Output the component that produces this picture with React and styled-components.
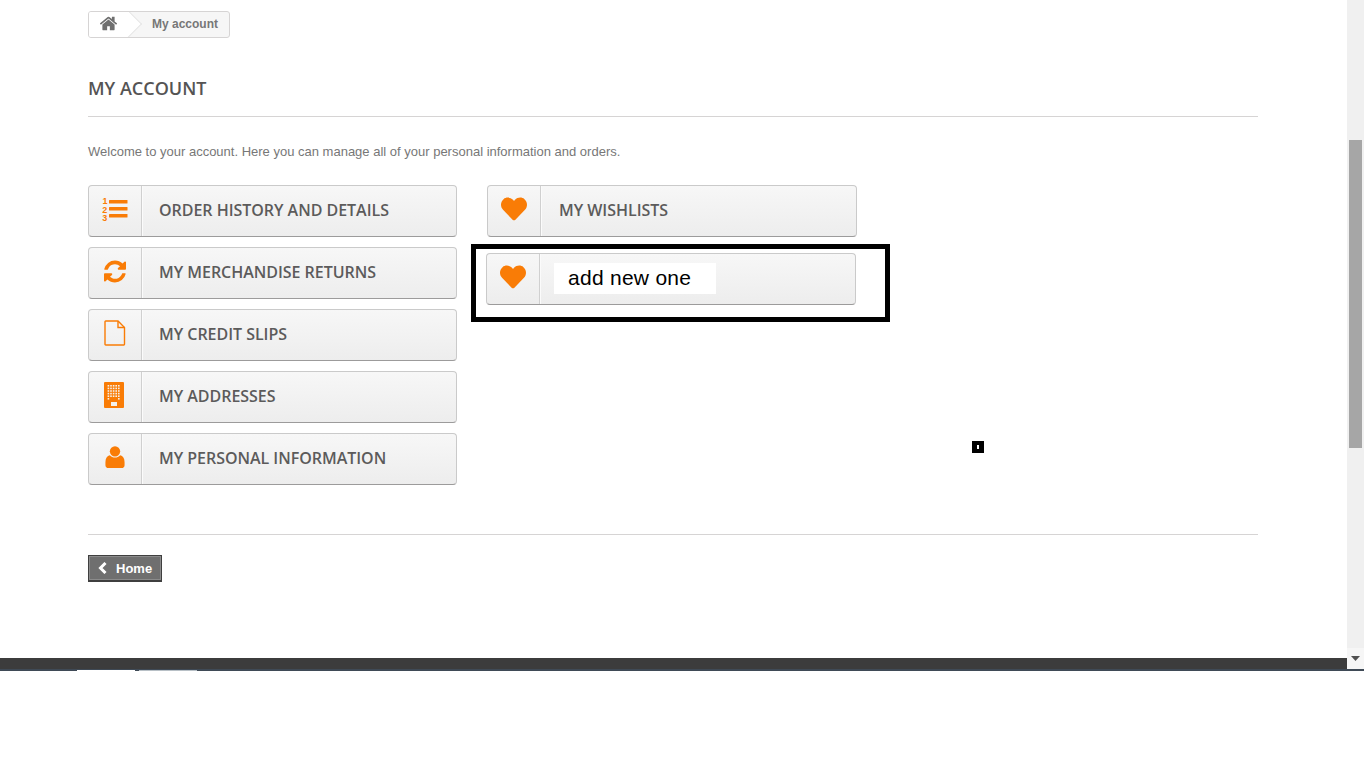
import React from 'react';
import styled, { createGlobalStyle } from 'styled-components';
import { FaHeart } from 'react-icons/fa';

const ORANGE = '#f97c06';

const GlobalStyle = createGlobalStyle`
  html, body {
    margin: 0;
    padding: 0;
    height: 100%;
    overflow: hidden;
    background: #fff;
  }
  body {
    font-family: "Liberation Sans", Arial, sans-serif;
    color: #777;
  }
`;

const Screen = styled.div`
  position: relative;
  width: 1366px;
  height: 768px;
  overflow: hidden;
`;

const Viewport = styled.div`
  display: flex;
  width: 1364px;
  height: 669px;
`;

const PageColumn = styled.div`
  flex: 1;
  display: flex;
  flex-direction: column;
  min-width: 0;
`;

const Content = styled.main`
  flex: 1;
  width: 1170px;
  margin-left: 88px;
  padding-top: 11px;
  box-sizing: border-box;
`;

const Breadcrumb = styled.nav`
  display: inline-flex;
  height: 27px;
  box-sizing: border-box;
  border: 1px solid #d6d4d4;
  border-radius: 3px;
  overflow: hidden;
  background: #f6f6f6;
  font-size: 12px;
  font-weight: bold;
  color: #777;
`;

const HomeCrumb = styled.a`
  position: relative;
  width: 40px;
  display: flex;
  align-items: center;
  justify-content: center;
  padding: 0 2px 3px 0;
  box-sizing: border-box;
  background: #fff;

  svg {
    position: relative;
    z-index: 1;
  }

  &::after {
    content: '';
    position: absolute;
    right: -9px;
    top: 2px;
    width: 19px;
    height: 19px;
    background: #fff;
    border-top: 1px solid #e4e4e4;
    border-right: 1px solid #e4e4e4;
    transform: rotate(45deg);
  }
`;

const CurrentCrumb = styled.span`
  display: flex;
  align-items: center;
  padding: 0 11px 2px 23px;
`;

const PageHeading = styled.h1`
  margin: 38px 0 0;
  padding-bottom: 16px;
  border-bottom: 1px solid #d6d4d4;
  font-family: "Open Sans", sans-serif;
  font-size: 18px;
  line-height: 24px;
  font-weight: 600;
  color: #555454;
`;

const Intro = styled.p`
  margin: 26px 0 0;
  font-size: 13px;
  line-height: 18px;
  color: #777;
`;

const Columns = styled.div`
  display: flex;
  margin-top: 24px;
  padding-bottom: 49px;
  border-bottom: 1px solid #d6d4d4;
`;

const LeftColumn = styled.div`
  display: flex;
  flex-direction: column;
  gap: 10px;
  width: 369px;
`;

const RightColumn = styled.div`
  display: flex;
  flex-direction: column;
  margin-left: 30px;
  width: 370px;
`;

const Highlight = styled.div`
  width: 419px;
  height: 78px;
  margin: 7px 0 0 -16px;
  padding: 4px 0 0 10px;
  border: 5px solid #000;
  box-sizing: border-box;
  background: #fff;
`;

const AccountButton = styled.a`
  display: flex;
  width: ${(p) => p.$width || 369}px;
  height: 52px;
  box-sizing: border-box;
  border: 1px solid #cacaca;
  border-bottom-color: #9c9b9b;
  border-radius: 4px;
  background: linear-gradient(to bottom, #f7f7f7 0%, #ededed 100%);
  font-family: "Open Sans", sans-serif;
  font-size: 16px;
  font-weight: 600;
  letter-spacing: -0.03px;
  color: #5c5b5b;
`;

const IconCell = styled.span`
  flex: none;
  width: 53px;
  display: flex;
  align-items: center;
  justify-content: center;
  padding: 0 1px 4px 0;
  box-sizing: border-box;
  border-right: 1px solid #d0d0d0;
  box-shadow: 1px 0 0 #fbfbfb;
  color: ${ORANGE};
  font-size: 26px;
`;

const ButtonLabel = styled.span`
  display: flex;
  align-items: center;
  padding: 0 0 2px ${(p) => p.$indent || 17}px;
`;

const PastedLabel = styled.span`
  display: flex;
  align-items: center;
  height: 31px;
  margin: 9px 0 0 14px;
  padding: 0 25px 2px 14px;
  box-sizing: border-box;
  background: #fff;
  font-family: "Liberation Sans", Arial, sans-serif;
  font-size: 21px;
  letter-spacing: 0.27px;
  font-weight: normal;
  color: #000;
`;

const BackRow = styled.div`
  margin-top: 20px;
`;

const BackButton = styled.a`
  display: inline-flex;
  align-items: center;
  gap: 9px;
  width: 74px;
  height: 27px;
  padding-left: 9px;
  box-sizing: border-box;
  border: 1px solid #3f3f3f;
  border-bottom-width: 2px;
  box-shadow: inset 0 0 0 1px #8b8b8b;
  background: #6f6f6f;
  font-size: 13px;
  font-weight: bold;
  color: #fff;
`;

const FooterBand = styled.footer`
  flex: none;
  height: 11px;
  background: #3c3c3c;
`;

const FooterStrip = styled.div`
  width: 1364px;
  height: 2px;
  display: flex;
  align-items: flex-end;
  background: #3f4a56;
`;

const FooterTab = styled.span`
  width: 58px;
  height: 1px;
  margin-left: ${(p) => p.$offset}px;
  background: ${(p) => p.$color};
`;

const Scrollbar = styled.div`
  flex: none;
  width: 17px;
  display: flex;
  flex-direction: column;
  background: #f0f0f0;
`;

const ScrollThumb = styled.div`
  width: 13px;
  height: 308px;
  margin: 140px 0 0 2px;
  background: #a6a6a6;
`;

const ScrollArrow = styled.div`
  margin-top: auto;
  height: 21px;
  display: flex;
  align-items: center;
  justify-content: center;
  background: #f6f6f6;

  svg {
    display: block;
  }
`;

const CursorMark = styled.div`
  position: absolute;
  left: 972px;
  top: 441px;
  width: 12px;
  height: 12px;
  display: flex;
  align-items: center;
  justify-content: center;
  background: #000;

  &::after {
    content: '';
    width: 2px;
    height: 4px;
    background: #fff;
  }
`;

const BuildingShift = styled.span`
  display: flex;
  margin-right: 2px;
`;

function HomeIcon() {
  return (
    <svg width="19" height="19" viewBox="0 0 1792 1792" fill="#6f6f6f">
      <path d="M1472 992v480q0 26-19 45t-45 19h-384v-384h-256v384h-384q-26 0-45-19t-19-45v-480q0-1 .5-3t.5-3l575-474 575 474q1 2 1 6zm223-69l-62 74q-8 9-21 11h-3q-13 0-21-7l-692-577-692 577q-12 8-24 7-13-2-21-11l-62-74q-8-10-7-23.5t11-21.5l719-599q32-26 76-26t76 26l244 204v-195q0-14 9-23t23-9h192q14 0 23 9t9 23v408l219 182q10 8 11 21.5t-7 23.5z" />
    </svg>
  );
}

function NumberedListIcon() {
  return (
    <svg width="26" height="26" viewBox="0 0 26 26" fill={ORANGE}>
      <text x="0.5" y="8" fontFamily="Liberation Sans, sans-serif" fontSize="9" fontWeight="bold">1</text>
      <text x="0.3" y="16.5" fontFamily="Liberation Sans, sans-serif" fontSize="9" fontWeight="bold">2</text>
      <text x="0.3" y="25" fontFamily="Liberation Sans, sans-serif" fontSize="9" fontWeight="bold">3</text>
      <rect x="7" y="4" width="18.5" height="3.5" rx="0.5" />
      <rect x="7" y="11" width="18.5" height="3.5" rx="0.5" />
      <rect x="7" y="18" width="18.5" height="3.5" rx="0.5" />
    </svg>
  );
}

function RefreshIcon() {
  return (
    <svg width="22" height="23" viewBox="128 128 1536 1536" fill={ORANGE}>
      <path d="M1639 1056q0 5-1 7-64 268-268 434.5t-478 166.5q-146 0-282.5-55t-243.5-157l-129 129q-19 19-45 19t-45-19-19-45v-448q0-26 19-45t45-19h448q26 0 45 19t19 45-19 45l-137 137q71 66 161 102t187 36q134 0 250-65t186-179q11-17 53-117 8-23 30-23h192q13 0 22.5 9.5t9.5 22.5zm25-800v448q0 26-19 45t-45 19h-448q-26 0-45-19t-19-45 19-45l138-138q-148-137-349-137-134 0-250 65t-186 179q-11 17-53 117-8 23-30 23h-199q-13 0-22.5-9.5t-9.5-22.5v-7q65-268 270-434.5t480-166.5q146 0 284 55.5t245 156.5l130-129q19-19 45-19t45 19 19 45z" />
    </svg>
  );
}

function FileIcon() {
  return (
    <svg width="22" height="26" viewBox="0 0 22 26" fill="none" stroke={ORANGE} strokeWidth="1.4">
      <path d="M1.7 1h12.3l6.5 6.500v16.800a.7.7 0 0 1-.7.7H1.700a.7.7 0 0 1-.7-.7V1.700a.7.7 0 0 1 .7-.7z" />
      <path d="M14 1v6.500h6.500" />
    </svg>
  );
}

function BuildingIcon() {
  const dots = [];
  for (let row = 0; row < 6; row += 1) {
    for (let col = 0; col < 5; col += 1) {
      if (row < 5 || col === 0 || col === 4) {
        dots.push(<rect key={`${row}-${col}`} x={3.6 + col * 2.6} y={3 + row * 2.6} width="1.6" height="1.6" fill="#f4f1ec" />);
      }
    }
  }
  return (
    <svg width="20" height="26" viewBox="0 0 20 26">
      <rect width="20" height="26" rx="1" fill={ORANGE} />
      {dots}
      <rect x="7" y="20" width="6" height="4" fill="#f4f1ec" />
    </svg>
  );
}

function UserIcon() {
  return (
    <svg width="20" height="22" viewBox="0 0 20 23">
      <circle cx="10" cy="5.6" r="5.4" fill={ORANGE} />
      <path d="M4.6 9.6C6 11.3 8 12 10 12s4-.7 5.400-2.400C18.300 10.200 20 12.800 20 17v3c0 1.700-1.300 3-3 3H3c-1.700 0-3-1.300-3-3v-3c0-4.200 1.700-6.800 4.600-7.400z" fill={ORANGE} />
    </svg>
  );
}

function BackChevron() {
  return (
    <svg width="9" height="12" viewBox="0 0 9 12" fill="none" stroke="#fff" strokeWidth="3">
      <path d="M7.5 1L2.500 6l5 5" />
    </svg>
  );
}

const accountLinks = [
  { label: 'ORDER HISTORY AND DETAILS', icon: <NumberedListIcon /> },
  { label: 'MY MERCHANDISE RETURNS', icon: <RefreshIcon /> },
  { label: 'MY CREDIT SLIPS', icon: <FileIcon /> },
  { label: 'MY ADDRESSES', icon: <BuildingShift><BuildingIcon /></BuildingShift> },
  { label: 'MY PERSONAL INFORMATION', icon: <UserIcon /> },
];

export default function App() {
  return (
    <Screen>
      <GlobalStyle />
      <Viewport>
        <PageColumn>
          <Content>
            <Breadcrumb>
              <HomeCrumb><HomeIcon /></HomeCrumb>
              <CurrentCrumb>My account</CurrentCrumb>
            </Breadcrumb>
            <PageHeading>MY ACCOUNT</PageHeading>
            <Intro>Welcome to your account. Here you can manage all of your personal information and orders.</Intro>
            <Columns>
              <LeftColumn>
                {accountLinks.map((link) => (
                  <AccountButton key={link.label}>
                    <IconCell>{link.icon}</IconCell>
                    <ButtonLabel>{link.label}</ButtonLabel>
                  </AccountButton>
                ))}
              </LeftColumn>
              <RightColumn>
                <AccountButton $width={370}>
                  <IconCell><FaHeart /></IconCell>
                  <ButtonLabel $indent={18}>MY WISHLISTS</ButtonLabel>
                </AccountButton>
                <Highlight>
                  <AccountButton $width={370}>
                    <IconCell><FaHeart /></IconCell>
                    <PastedLabel>add new one</PastedLabel>
                  </AccountButton>
                </Highlight>
              </RightColumn>
            </Columns>
            <BackRow>
              <BackButton><BackChevron />Home</BackButton>
            </BackRow>
          </Content>
          <FooterBand />
        </PageColumn>
        <Scrollbar>
          <ScrollThumb />
          <ScrollArrow>
            <svg width="9" height="5" viewBox="0 0 9 5"><path d="M0 0h9L4.500 5z" fill="#505050" /></svg>
          </ScrollArrow>
        </Scrollbar>
      </Viewport>
      <FooterStrip>
        <FooterTab $offset={77} $color="#fff" />
        <FooterTab $offset={4} $color="#b8c0c6" />
      </FooterStrip>
      <CursorMark />
    </Screen>
  );
}
